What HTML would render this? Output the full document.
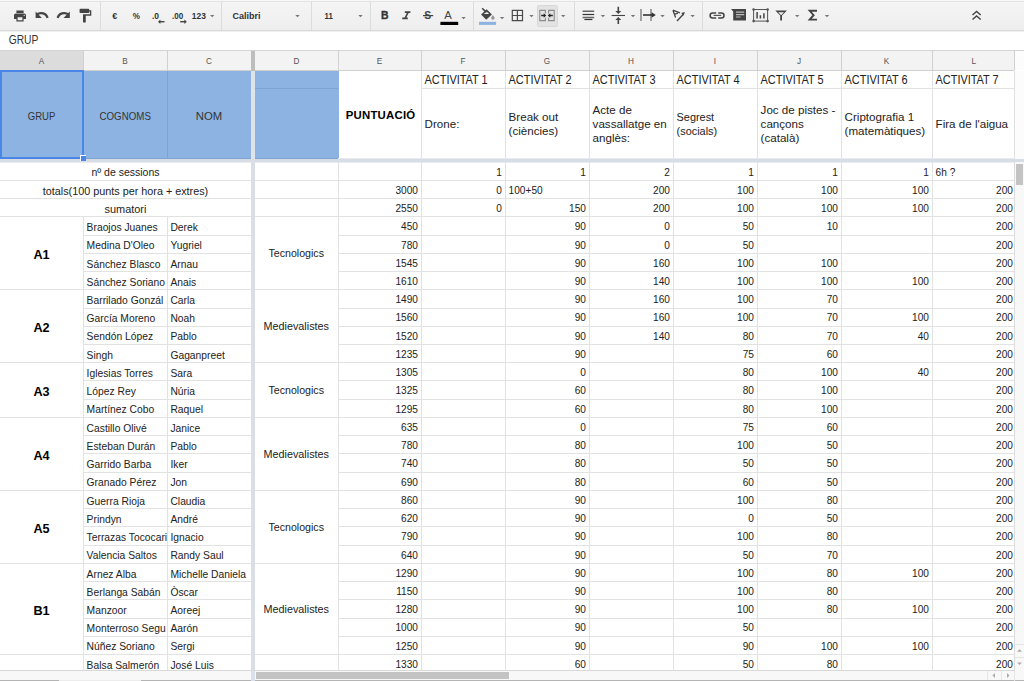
<!DOCTYPE html><html><head><meta charset="utf-8"><style>
*{margin:0;padding:0}
html,body{width:1024px;height:681px;overflow:hidden;background:#fff}
.a{position:absolute}
svg{display:block}
text{font-family:"Liberation Sans",sans-serif;white-space:pre}
</style></head><body>

<svg class="a" style="position:absolute;left:0;top:0" width="1024" height="681" viewBox="0 0 1024 681" shape-rendering="crispEdges">
<defs><linearGradient id="tg" x1="0" y1="0" x2="0" y2="1"><stop offset="0" stop-color="#f5f5f5"/><stop offset="1" stop-color="#eeeeee"/></linearGradient></defs>
<rect x="0" y="0" width="1024" height="31" fill="url(#tg)"/>
<rect x="0" y="0" width="1024" height="1" fill="#f7f7f7"/>
<rect x="0" y="1" width="1024" height="1" fill="#e3e3e3"/>
<rect x="0" y="30" width="1024" height="1" fill="#d9d9d9"/>
<rect x="0" y="31" width="1024" height="1" fill="#f0f0f0"/>
<rect x="100" y="2" width="1" height="28" fill="#dcdcdc"/>
<rect x="221" y="2" width="1" height="28" fill="#dcdcdc"/>
<rect x="311" y="2" width="1" height="28" fill="#dcdcdc"/>
<rect x="370" y="2" width="1" height="28" fill="#dcdcdc"/>
<rect x="473" y="2" width="1" height="28" fill="#dcdcdc"/>
<rect x="574" y="2" width="1" height="28" fill="#dcdcdc"/>
<rect x="702" y="2" width="1" height="28" fill="#dcdcdc"/>
</svg>
<svg class="a" style="left:0;top:0" width="1024" height="31" viewBox="0 0 1024 31">
<rect x="537.5" y="5.5" width="20" height="21" rx="1" fill="#e3e3e3" stroke="#d8d8d8" stroke-width="1"/>
<g transform="translate(12.8,8.8) scale(0.6)" fill="#444"><path d="M19 8H5c-1.66 0-3 1.34-3 3v6h4v4h12v-4h4v-6c0-1.66-1.34-3-3-3zm-3 11H8v-5h8v5zm3-7c-.55 0-1-.45-1-1s.45-1 1-1 1 .45 1 1-.45 1-1 1zm-1-9H6v4h12V3z"/></g>
<path d="M47.6 17.8c-1-2.9-3.6-4.7-6.6-4.7-1.8 0-3.3.6-4.5 1.6" stroke="#444" stroke-width="2.3" fill="none"/>
<path d="M35.6 11.6v6.3h6.3z" fill="#444"/>
<path d="M57.6 17.8c1-2.9 3.6-4.7 6.6-4.7 1.8 0 3.3.6 4.5 1.6" stroke="#444" stroke-width="2.3" fill="none"/>
<path d="M69.8 11.6v6.3h-6.3z" fill="#444"/>
<g transform="translate(76.8,7.4) scale(0.69)" fill="#444"><path d="M18 4V3c0-.55-.45-1-1-1H5c-.55 0-1 .45-1 1v4c0 .55.45 1 1 1h12c.55 0 1-.45 1-1V6h1v4H9v11c0 .55.45 1 1 1h2c.55 0 1-.45 1-1v-9h8V4h-3z"/></g>
<text transform="translate(112.2,18.9) scale(0.95,1)" font-family="Liberation Sans" font-size="9.4" font-weight="bold" fill="#333">€</text>
<text transform="translate(132.8,18.9) scale(0.86,1)" font-family="Liberation Sans" font-size="9.4" font-weight="bold" fill="#333">%</text>
<text transform="translate(152.0,18.9) scale(0.9,1)" font-family="Liberation Sans" font-size="9.4" font-weight="bold" fill="#333">.0</text>
<path d="M159.5 21.7h5" stroke="#444" stroke-width="1.4" fill="none"/><path d="M158 21.7l2.4-2.2v4.4z" fill="#444" fill="none"/>
<text transform="translate(172.0,18.9) scale(0.86,1)" font-family="Liberation Sans" font-size="9.4" font-weight="bold" fill="#333">.00</text>
<path d="M180.2 21.7h5" stroke="#444" stroke-width="1.4" fill="none"/><path d="M186.8 21.7l-2.4-2.2v4.4z" fill="#444" fill="none"/>
<text transform="translate(191.8,19.2) scale(0.86,1)" font-family="Liberation Sans" font-size="9.8" font-weight="bold" fill="#333">123</text>
<path d="M210 15h4.4l-2.2 2.2z" fill="#777"/>
<text transform="translate(232.4,19.3) scale(0.96,1)" font-family="Liberation Sans" font-size="9.4" font-weight="bold" fill="#333">Calibri</text>
<path d="M295.3 15h4.4l-2.2 2.2z" fill="#777"/>
<text transform="translate(324.6,19.3) scale(0.8,1)" font-family="Liberation Sans" font-size="9.8" font-weight="bold" fill="#333">11</text>
<path d="M358.3 15h4.4l-2.2 2.2z" fill="#777"/>
<text x="380.9" y="19.1" font-family="Liberation Sans" font-size="10.4" font-weight="bold" fill="#333" stroke="#333" stroke-width="0.35">B</text>
<path d="M404.8 12.1h5.6M402.2 18.4h5.6M408.2 12.1l-3.2 6.3" stroke="#444" stroke-width="1.6" fill="none"/>
<text x="424.2" y="19.2" font-family="Liberation Sans" font-size="10.4" font-weight="bold" fill="#444">S</text>
<path d="M423 15.6h10.2" stroke="#444" stroke-width="1.2"/>
<text x="444.3" y="19.1" font-family="Liberation Sans" font-size="11.3" fill="#444">A</text>
<rect x="440.4" y="21.8" width="17.8" height="3.2" fill="#000"/>
<path d="M461.4 17h4.4l-2.2 2.2z" fill="#777"/>
<g shape-rendering="geometricPrecision"><path d="M481.1 14.6L486.6 9.3 491.9 14.4 486.2 19.7z" fill="#444"/><path d="M483.9 13.9L486.5 11.5 489.1 13.9z" fill="#eee"/><path d="M482.2 8.2L486.4 12.4" stroke="#444" stroke-width="1.5"/><path d="M492.9 14.9c-.9 1.3-1.8 2.3-1.8 3.1a1.8 1.8 0 0 0 3.6 0c0-.8-.9-1.8-1.8-3.1z" fill="#999"/></g>
<rect x="479" y="21.8" width="17.1" height="3.1" fill="#8db3e2"/>
<path d="M499.9 17h4.4l-2.2 2.2z" fill="#777"/>
<path d="M512.3 10.4h10.2v10.2h-10.2zM517.4 10.4v10.2M512.3 15.5h10.2" stroke="#4a4a4a" stroke-width="1.2" fill="none"/>
<path d="M529.3 15h4.4l-2.2 2.2z" fill="#777"/>
<path d="M545.4 13.4v-3h-5.6v10.2h5.6v-2.8M548.6 13.4v-3h5.6v10.2h-5.6v-2.8" stroke="#8a8a8a" stroke-width="1.1" fill="none"/>
<path d="M541.2 15.5h3M552.8 15.5h-3" stroke="#222" stroke-width="1.3" fill="none"/><path d="M546.2 15.5l-2.5-2.2v4.4zM547.8 15.5l2.5-2.2v4.4z" fill="#222"/>
<path d="M561 15h4.4l-2.2 2.2z" fill="#777"/>
<path d="M582.6 11.3h11.6M582.6 17.5h11.6" stroke="#666" stroke-width="1.6" fill="none"/>
<path d="M582.6 14.5h11.6" stroke="#333" stroke-width="1.2" fill="none"/>
<path d="M584.4 19.5h8" stroke="#333" stroke-width="1.2" fill="none"/>
<path d="M600.7 15h4.4l-2.2 2.2z" fill="#777"/>
<path d="M618.3 6.8v5.5M618.3 18.5v5.5" stroke="#444" stroke-width="1.6" fill="none"/><path d="M611.6 15.5h13.4" stroke="#444" stroke-width="1.1" fill="none"/>
<path d="M615.3 11l3 3.1 3-3.1zM615.3 20l3-3.1 3 3.1z" fill="#444"/>
<path d="M630.8 15h4.4l-2.2 2.2z" fill="#777"/>
<path d="M641 9v12M651 9v12" stroke="#999" stroke-width="1.8"/>
<path d="M643 15h9.5" stroke="#333" stroke-width="1.6"/><path d="M651.6 12.2l4.2 2.8-4.2 2.8z" fill="#333"/>
<path d="M660.3 15h4.4l-2.2 2.2z" fill="#777"/>
<path d="M672.9 10.2l2.7 7.3M672.9 10.2l7 2.6M674.4 14.2l3.5-.9" stroke="#444" stroke-width="1.3" fill="none"/>
<path d="M677 21l6.6-6.9" stroke="#444" stroke-width="1.4" fill="none"/>
<path d="M681.2 13.1l3.6-1.2-1.1 3.6z" fill="#444"/>
<path d="M690.4 15h4.4l-2.2 2.2z" fill="#777"/>
<path d="M716.2 12.9h-3.6a2.5 2.5 0 0 0 0 5h3.6M718.2 12.9h3.3a2.5 2.5 0 0 1 0 5h-3.3" stroke="#444" stroke-width="1.5" fill="none"/>
<path d="M713.6 15.4h7.6" stroke="#555" stroke-width="1.2" fill="none"/>
<path d="M731 9h15v11.6h-12.8v-9.2z" fill="#444"/>
<path d="M736 12.2h8.2M736 14.6h8.2M736 17h4.6" stroke="#bbb" stroke-width="1.2"/>
<rect x="753.6" y="9.5" width="14" height="11.6" fill="none" stroke="#555" stroke-width="1"/>
<circle cx="753.6" cy="9.5" r="1.3" fill="#555"/>
<circle cx="767.6" cy="9.5" r="1.3" fill="#555"/>
<circle cx="753.6" cy="21.1" r="1.3" fill="#555"/>
<circle cx="767.6" cy="21.1" r="1.3" fill="#555"/>
<path d="M757.1 12v6.6M760.4 15.2v3.4M763.9 13.3v5.3" stroke="#444" stroke-width="1.5"/>
<path d="M775.3 10.5h11.6l-4.9 5v5.1h-1.8v-5.1z" fill="#444"/><path d="M778.2 12.3h5.8l-2.9 2.9z" fill="#efefef"/>
<path d="M795 15h4.4l-2.2 2.2z" fill="#777"/>
<path d="M817 10.8h-7.3l3.9 4.4-3.9 4.4h7.3" stroke="#444" stroke-width="1.9" fill="none"/>
<path d="M824.8 15h4.4l-2.2 2.2z" fill="#777"/>
<path d="M972.5 15l4.1-3.5 4.1 3.5M972.5 19.5l4.1-3.5 4.1 3.5" stroke="#444" stroke-width="1.4" fill="none"/>
</svg>
<svg class="a" style="position:absolute;left:0;top:0" width="1024" height="681" viewBox="0 0 1024 681" shape-rendering="crispEdges">
<rect x="0" y="32" width="1024" height="18" fill="#ffffff"/>
<rect x="0" y="50" width="1024" height="1" fill="#d4d4d4"/>
<text transform="translate(8.70,44.20) scale(0.84,1)" font-size="12.2" text-anchor="start" font-weight="normal" fill="#333">GRUP</text>
<rect x="0" y="51" width="1024" height="19" fill="#f3f3f3"/>
<rect x="0" y="51" width="83" height="19" fill="#dcdcdc"/>
<rect x="0" y="70" width="1014" height="1" fill="#d0d0d0"/>
<text x="41.50" y="63.50" font-size="8.2" text-anchor="middle" font-weight="normal" fill="#555">A</text>
<rect x="83" y="51" width="1" height="19" fill="#d0d0d0"/>
<text x="125.00" y="63.50" font-size="8.2" text-anchor="middle" font-weight="normal" fill="#555">B</text>
<rect x="167" y="51" width="1" height="19" fill="#d0d0d0"/>
<text x="209.00" y="63.50" font-size="8.2" text-anchor="middle" font-weight="normal" fill="#555">C</text>
<text x="296.50" y="63.50" font-size="8.2" text-anchor="middle" font-weight="normal" fill="#555">D</text>
<rect x="338" y="51" width="1" height="19" fill="#d0d0d0"/>
<text x="379.50" y="63.50" font-size="8.2" text-anchor="middle" font-weight="normal" fill="#555">E</text>
<rect x="421" y="51" width="1" height="19" fill="#d0d0d0"/>
<text x="463.00" y="63.50" font-size="8.2" text-anchor="middle" font-weight="normal" fill="#555">F</text>
<rect x="505" y="51" width="1" height="19" fill="#d0d0d0"/>
<text x="547.00" y="63.50" font-size="8.2" text-anchor="middle" font-weight="normal" fill="#555">G</text>
<rect x="589" y="51" width="1" height="19" fill="#d0d0d0"/>
<text x="631.00" y="63.50" font-size="8.2" text-anchor="middle" font-weight="normal" fill="#555">H</text>
<rect x="673" y="51" width="1" height="19" fill="#d0d0d0"/>
<text x="715.00" y="63.50" font-size="8.2" text-anchor="middle" font-weight="normal" fill="#555">I</text>
<rect x="757" y="51" width="1" height="19" fill="#d0d0d0"/>
<text x="799.00" y="63.50" font-size="8.2" text-anchor="middle" font-weight="normal" fill="#555">J</text>
<rect x="841" y="51" width="1" height="19" fill="#d0d0d0"/>
<text x="886.50" y="63.50" font-size="8.2" text-anchor="middle" font-weight="normal" fill="#555">K</text>
<rect x="932" y="51" width="1" height="19" fill="#d0d0d0"/>
<text x="973.75" y="63.50" font-size="8.2" text-anchor="middle" font-weight="normal" fill="#555">L</text>
<rect x="1014" y="51" width="1" height="19" fill="#d0d0d0"/>
<rect x="251" y="51" width="4" height="20" fill="#bdbdbd"/>
<rect x="1015" y="51" width="9" height="19" fill="#fcfcfc"/>
<rect x="0" y="71" width="251" height="88" fill="#8db3e2"/>
<rect x="255" y="71" width="84" height="88" fill="#8db3e2"/>
<rect x="0" y="158" width="251" height="1" fill="#7fa3d2"/>
<rect x="255" y="158" width="84" height="1" fill="#7fa3d2"/>
<rect x="83" y="71" width="1" height="87" fill="#7fa3d2"/>
<rect x="167" y="71" width="1" height="87" fill="#7fa3d2"/>
<rect x="255" y="88" width="84" height="1" fill="#7fa3d2"/>
<rect x="421" y="71" width="1" height="87" fill="#e2e2e2"/>
<rect x="505" y="71" width="1" height="87" fill="#e2e2e2"/>
<rect x="589" y="71" width="1" height="87" fill="#e2e2e2"/>
<rect x="673" y="71" width="1" height="87" fill="#e2e2e2"/>
<rect x="757" y="71" width="1" height="87" fill="#e2e2e2"/>
<rect x="841" y="71" width="1" height="87" fill="#e2e2e2"/>
<rect x="932" y="71" width="1" height="87" fill="#e2e2e2"/>
<rect x="421" y="88" width="593" height="1" fill="#e2e2e2"/>
<rect x="0" y="70" width="84" height="2" fill="#4a86e8"/>
<rect x="0" y="70" width="2" height="89" fill="#4a86e8"/>
<rect x="82" y="70" width="2" height="89" fill="#4a86e8"/>
<rect x="0" y="157" width="84" height="2" fill="#4a86e8"/>
<text transform="translate(41.50,119.60) scale(0.9,1)" font-size="10.6" text-anchor="middle" font-weight="normal" fill="#333">GRUP</text>
<text transform="translate(125.20,119.60) scale(0.92,1)" font-size="10.6" text-anchor="middle" font-weight="normal" fill="#333">COGNOMS</text>
<text transform="translate(209.00,119.60) scale(1.07,1)" font-size="10.6" text-anchor="middle" font-weight="normal" fill="#333">NOM</text>
<text x="345.80" y="119.40" font-size="11.4" text-anchor="start" font-weight="bold" fill="#000" letter-spacing="0.2">PUNTUACIÓ</text>
<text transform="translate(424.60,83.90) scale(0.895,1)" font-size="12.2" text-anchor="start" font-weight="normal" fill="#222">ACTIVITAT 1</text>
<text x="424.60" y="127.90" font-size="11.6" text-anchor="start" font-weight="normal" fill="#222">Drone:</text>
<text transform="translate(508.60,83.90) scale(0.895,1)" font-size="12.2" text-anchor="start" font-weight="normal" fill="#222">ACTIVITAT 2</text>
<text x="508.60" y="121.03" font-size="11.6" text-anchor="start" font-weight="normal" fill="#222">Break out</text>
<text x="508.60" y="134.78" font-size="11.6" text-anchor="start" font-weight="normal" fill="#222">(ciències)</text>
<text transform="translate(592.60,83.90) scale(0.895,1)" font-size="12.2" text-anchor="start" font-weight="normal" fill="#222">ACTIVITAT 3</text>
<text x="592.60" y="114.15" font-size="11.6" text-anchor="start" font-weight="normal" fill="#222">Acte de</text>
<text x="592.60" y="127.90" font-size="11.6" text-anchor="start" font-weight="normal" fill="#222">vassallatge en</text>
<text x="592.60" y="141.65" font-size="11.6" text-anchor="start" font-weight="normal" fill="#222">anglès:</text>
<text transform="translate(676.60,83.90) scale(0.895,1)" font-size="12.2" text-anchor="start" font-weight="normal" fill="#222">ACTIVITAT 4</text>
<text x="676.60" y="121.03" font-size="10.9" text-anchor="start" font-weight="normal" fill="#222">Segrest</text>
<text x="676.60" y="134.78" font-size="10.9" text-anchor="start" font-weight="normal" fill="#222">(socials)</text>
<text transform="translate(760.60,83.90) scale(0.895,1)" font-size="12.2" text-anchor="start" font-weight="normal" fill="#222">ACTIVITAT 5</text>
<text x="760.60" y="114.15" font-size="11.6" text-anchor="start" font-weight="normal" fill="#222">Joc de pistes -</text>
<text x="760.60" y="127.90" font-size="11.6" text-anchor="start" font-weight="normal" fill="#222">cançons</text>
<text x="760.60" y="141.65" font-size="11.6" text-anchor="start" font-weight="normal" fill="#222">(català)</text>
<text transform="translate(844.60,83.90) scale(0.895,1)" font-size="12.2" text-anchor="start" font-weight="normal" fill="#222">ACTIVITAT 6</text>
<text x="844.60" y="121.03" font-size="11.6" text-anchor="start" font-weight="normal" fill="#222">Criptografia 1</text>
<text x="844.60" y="134.78" font-size="11.6" text-anchor="start" font-weight="normal" fill="#222">(matemàtiques)</text>
<text transform="translate(935.60,83.90) scale(0.895,1)" font-size="12.2" text-anchor="start" font-weight="normal" fill="#222">ACTIVITAT 7</text>
<text x="935.60" y="127.90" font-size="11.6" text-anchor="start" font-weight="normal" fill="#222">Fira de l&#39;aigua</text>
<rect x="338" y="158" width="686" height="1" fill="#e6e9ef"/>
<rect x="0" y="159" width="1024" height="3" fill="#d7dce5"/>
<rect x="0" y="162" width="1014" height="1" fill="#e9ecf1"/>
<rect x="251" y="71" width="4" height="88" fill="#dfe3ea"/>
<rect x="251" y="159" width="4" height="522" fill="#d9dee7"/>
<rect x="0" y="157" width="84" height="2" fill="#4a86e8"/>
<rect x="80" y="155" width="6" height="6" fill="#4a86e8"/>
<rect x="80" y="155" width="6" height="1" fill="#ffffff"/>
<rect x="80" y="155" width="1" height="6" fill="#ffffff"/>
<rect x="0" y="180" width="251" height="1" fill="#e2e2e2"/>
<rect x="255" y="180" width="759" height="1" fill="#e2e2e2"/>
<rect x="0" y="198" width="251" height="1" fill="#e2e2e2"/>
<rect x="255" y="198" width="759" height="1" fill="#e2e2e2"/>
<rect x="0" y="216" width="251" height="1" fill="#e2e2e2"/>
<rect x="255" y="216" width="759" height="1" fill="#e2e2e2"/>
<rect x="83" y="235" width="168" height="1" fill="#e2e2e2"/>
<rect x="338" y="235" width="676" height="1" fill="#e2e2e2"/>
<rect x="83" y="253" width="168" height="1" fill="#e2e2e2"/>
<rect x="338" y="253" width="676" height="1" fill="#e2e2e2"/>
<rect x="83" y="271" width="168" height="1" fill="#e2e2e2"/>
<rect x="338" y="271" width="676" height="1" fill="#e2e2e2"/>
<rect x="0" y="289" width="251" height="1" fill="#e2e2e2"/>
<rect x="255" y="289" width="759" height="1" fill="#e2e2e2"/>
<rect x="83" y="308" width="168" height="1" fill="#e2e2e2"/>
<rect x="338" y="308" width="676" height="1" fill="#e2e2e2"/>
<rect x="83" y="326" width="168" height="1" fill="#e2e2e2"/>
<rect x="338" y="326" width="676" height="1" fill="#e2e2e2"/>
<rect x="83" y="344" width="168" height="1" fill="#e2e2e2"/>
<rect x="338" y="344" width="676" height="1" fill="#e2e2e2"/>
<rect x="0" y="362" width="251" height="1" fill="#e2e2e2"/>
<rect x="255" y="362" width="759" height="1" fill="#e2e2e2"/>
<rect x="83" y="380" width="168" height="1" fill="#e2e2e2"/>
<rect x="338" y="380" width="676" height="1" fill="#e2e2e2"/>
<rect x="83" y="399" width="168" height="1" fill="#e2e2e2"/>
<rect x="338" y="399" width="676" height="1" fill="#e2e2e2"/>
<rect x="0" y="417" width="251" height="1" fill="#e2e2e2"/>
<rect x="255" y="417" width="759" height="1" fill="#e2e2e2"/>
<rect x="83" y="435" width="168" height="1" fill="#e2e2e2"/>
<rect x="338" y="435" width="676" height="1" fill="#e2e2e2"/>
<rect x="83" y="453" width="168" height="1" fill="#e2e2e2"/>
<rect x="338" y="453" width="676" height="1" fill="#e2e2e2"/>
<rect x="83" y="472" width="168" height="1" fill="#e2e2e2"/>
<rect x="338" y="472" width="676" height="1" fill="#e2e2e2"/>
<rect x="0" y="490" width="251" height="1" fill="#e2e2e2"/>
<rect x="255" y="490" width="759" height="1" fill="#e2e2e2"/>
<rect x="83" y="508" width="168" height="1" fill="#e2e2e2"/>
<rect x="338" y="508" width="676" height="1" fill="#e2e2e2"/>
<rect x="83" y="526" width="168" height="1" fill="#e2e2e2"/>
<rect x="338" y="526" width="676" height="1" fill="#e2e2e2"/>
<rect x="83" y="545" width="168" height="1" fill="#e2e2e2"/>
<rect x="338" y="545" width="676" height="1" fill="#e2e2e2"/>
<rect x="0" y="563" width="251" height="1" fill="#e2e2e2"/>
<rect x="255" y="563" width="759" height="1" fill="#e2e2e2"/>
<rect x="83" y="581" width="168" height="1" fill="#e2e2e2"/>
<rect x="338" y="581" width="676" height="1" fill="#e2e2e2"/>
<rect x="83" y="599" width="168" height="1" fill="#e2e2e2"/>
<rect x="338" y="599" width="676" height="1" fill="#e2e2e2"/>
<rect x="83" y="618" width="168" height="1" fill="#e2e2e2"/>
<rect x="338" y="618" width="676" height="1" fill="#e2e2e2"/>
<rect x="83" y="636" width="168" height="1" fill="#e2e2e2"/>
<rect x="338" y="636" width="676" height="1" fill="#e2e2e2"/>
<rect x="0" y="654" width="251" height="1" fill="#e2e2e2"/>
<rect x="255" y="654" width="759" height="1" fill="#e2e2e2"/>
<rect x="83" y="216" width="1" height="454" fill="#e2e2e2"/>
<rect x="167" y="216" width="1" height="454" fill="#e2e2e2"/>
<rect x="338" y="162" width="1" height="508" fill="#e2e2e2"/>
<rect x="421" y="162" width="1" height="508" fill="#e2e2e2"/>
<rect x="505" y="162" width="1" height="508" fill="#e2e2e2"/>
<rect x="589" y="162" width="1" height="508" fill="#e2e2e2"/>
<rect x="673" y="162" width="1" height="508" fill="#e2e2e2"/>
<rect x="757" y="162" width="1" height="508" fill="#e2e2e2"/>
<rect x="841" y="162" width="1" height="508" fill="#e2e2e2"/>
<rect x="932" y="162" width="1" height="508" fill="#e2e2e2"/>
<defs><clipPath id="cb"><rect x="84" y="162" width="83" height="510"/></clipPath><clipPath id="cc"><rect x="168" y="162" width="83" height="510"/></clipPath><clipPath id="body"><rect x="0" y="162" width="1014" height="508"/></clipPath></defs>
<g clip-path="url(#body)">
<text transform="translate(125.50,176.37) scale(1.02,1)" font-size="10.3" text-anchor="middle" font-weight="normal" fill="#222">nº de sessions</text>
<text transform="translate(502.00,175.57) scale(0.88,1)" font-size="11.5" text-anchor="end" font-weight="normal" fill="#222">1</text>
<text transform="translate(586.00,175.57) scale(0.88,1)" font-size="11.5" text-anchor="end" font-weight="normal" fill="#222">1</text>
<text transform="translate(670.00,175.57) scale(0.88,1)" font-size="11.5" text-anchor="end" font-weight="normal" fill="#222">2</text>
<text transform="translate(754.00,175.57) scale(0.88,1)" font-size="11.5" text-anchor="end" font-weight="normal" fill="#222">1</text>
<text transform="translate(838.00,175.57) scale(0.88,1)" font-size="11.5" text-anchor="end" font-weight="normal" fill="#222">1</text>
<text transform="translate(929.00,175.57) scale(0.88,1)" font-size="11.5" text-anchor="end" font-weight="normal" fill="#222">1</text>
<text transform="translate(935.60,175.57) scale(0.88,1)" font-size="11.5" text-anchor="start" font-weight="normal" fill="#222">6h ?</text>
<text transform="translate(125.50,194.60) scale(1.05,1)" font-size="10.3" text-anchor="middle" font-weight="normal" fill="#222">totals(100 punts per hora + extres)</text>
<text transform="translate(418.00,193.80) scale(0.88,1)" font-size="11.5" text-anchor="end" font-weight="normal" fill="#222">3000</text>
<text transform="translate(502.00,193.80) scale(0.88,1)" font-size="11.5" text-anchor="end" font-weight="normal" fill="#222">0</text>
<text transform="translate(508.60,193.80) scale(0.88,1)" font-size="11.5" text-anchor="start" font-weight="normal" fill="#222">100+50</text>
<text transform="translate(670.00,193.80) scale(0.88,1)" font-size="11.5" text-anchor="end" font-weight="normal" fill="#222">200</text>
<text transform="translate(754.00,193.80) scale(0.88,1)" font-size="11.5" text-anchor="end" font-weight="normal" fill="#222">100</text>
<text transform="translate(838.00,193.80) scale(0.88,1)" font-size="11.5" text-anchor="end" font-weight="normal" fill="#222">100</text>
<text transform="translate(929.00,193.80) scale(0.88,1)" font-size="11.5" text-anchor="end" font-weight="normal" fill="#222">100</text>
<text transform="translate(1012.90,193.80) scale(0.88,1)" font-size="11.5" text-anchor="end" font-weight="normal" fill="#222">200</text>
<text transform="translate(125.50,212.83) scale(1.06,1)" font-size="10.3" text-anchor="middle" font-weight="normal" fill="#222">sumatori</text>
<text transform="translate(418.00,212.03) scale(0.88,1)" font-size="11.5" text-anchor="end" font-weight="normal" fill="#222">2550</text>
<text transform="translate(502.00,212.03) scale(0.88,1)" font-size="11.5" text-anchor="end" font-weight="normal" fill="#222">0</text>
<text transform="translate(586.00,212.03) scale(0.88,1)" font-size="11.5" text-anchor="end" font-weight="normal" fill="#222">150</text>
<text transform="translate(670.00,212.03) scale(0.88,1)" font-size="11.5" text-anchor="end" font-weight="normal" fill="#222">200</text>
<text transform="translate(754.00,212.03) scale(0.88,1)" font-size="11.5" text-anchor="end" font-weight="normal" fill="#222">100</text>
<text transform="translate(838.00,212.03) scale(0.88,1)" font-size="11.5" text-anchor="end" font-weight="normal" fill="#222">100</text>
<text transform="translate(929.00,212.03) scale(0.88,1)" font-size="11.5" text-anchor="end" font-weight="normal" fill="#222">100</text>
<text transform="translate(1012.90,212.03) scale(0.88,1)" font-size="11.5" text-anchor="end" font-weight="normal" fill="#222">200</text>
<g clip-path="url(#cb)"><text transform="translate(86.60,231.07) scale(1.01,1)" font-size="10.2" text-anchor="start" font-weight="normal" fill="#222">Braojos Juanes</text></g>
<g clip-path="url(#cc)"><text transform="translate(170.40,231.07) scale(1.01,1)" font-size="10.2" text-anchor="start" font-weight="normal" fill="#222">Derek</text></g>
<text transform="translate(418.00,230.27) scale(0.88,1)" font-size="11.5" text-anchor="end" font-weight="normal" fill="#222">450</text>
<text transform="translate(586.00,230.27) scale(0.88,1)" font-size="11.5" text-anchor="end" font-weight="normal" fill="#222">90</text>
<text transform="translate(670.00,230.27) scale(0.88,1)" font-size="11.5" text-anchor="end" font-weight="normal" fill="#222">0</text>
<text transform="translate(754.00,230.27) scale(0.88,1)" font-size="11.5" text-anchor="end" font-weight="normal" fill="#222">50</text>
<text transform="translate(838.00,230.27) scale(0.88,1)" font-size="11.5" text-anchor="end" font-weight="normal" fill="#222">10</text>
<text transform="translate(1012.90,230.27) scale(0.88,1)" font-size="11.5" text-anchor="end" font-weight="normal" fill="#222">200</text>
<g clip-path="url(#cb)"><text transform="translate(86.60,249.31) scale(1.01,1)" font-size="10.2" text-anchor="start" font-weight="normal" fill="#222">Medina D&#39;Oleo</text></g>
<g clip-path="url(#cc)"><text transform="translate(170.40,249.31) scale(1.01,1)" font-size="10.2" text-anchor="start" font-weight="normal" fill="#222">Yugriel</text></g>
<text transform="translate(418.00,248.51) scale(0.88,1)" font-size="11.5" text-anchor="end" font-weight="normal" fill="#222">780</text>
<text transform="translate(586.00,248.51) scale(0.88,1)" font-size="11.5" text-anchor="end" font-weight="normal" fill="#222">90</text>
<text transform="translate(670.00,248.51) scale(0.88,1)" font-size="11.5" text-anchor="end" font-weight="normal" fill="#222">0</text>
<text transform="translate(754.00,248.51) scale(0.88,1)" font-size="11.5" text-anchor="end" font-weight="normal" fill="#222">50</text>
<text transform="translate(1012.90,248.51) scale(0.88,1)" font-size="11.5" text-anchor="end" font-weight="normal" fill="#222">200</text>
<g clip-path="url(#cb)"><text transform="translate(86.60,267.54) scale(1.01,1)" font-size="10.2" text-anchor="start" font-weight="normal" fill="#222">Sánchez Blasco</text></g>
<g clip-path="url(#cc)"><text transform="translate(170.40,267.54) scale(1.01,1)" font-size="10.2" text-anchor="start" font-weight="normal" fill="#222">Arnau</text></g>
<text transform="translate(418.00,266.74) scale(0.88,1)" font-size="11.5" text-anchor="end" font-weight="normal" fill="#222">1545</text>
<text transform="translate(586.00,266.74) scale(0.88,1)" font-size="11.5" text-anchor="end" font-weight="normal" fill="#222">90</text>
<text transform="translate(670.00,266.74) scale(0.88,1)" font-size="11.5" text-anchor="end" font-weight="normal" fill="#222">160</text>
<text transform="translate(754.00,266.74) scale(0.88,1)" font-size="11.5" text-anchor="end" font-weight="normal" fill="#222">100</text>
<text transform="translate(838.00,266.74) scale(0.88,1)" font-size="11.5" text-anchor="end" font-weight="normal" fill="#222">100</text>
<text transform="translate(1012.90,266.74) scale(0.88,1)" font-size="11.5" text-anchor="end" font-weight="normal" fill="#222">200</text>
<g clip-path="url(#cb)"><text transform="translate(86.60,285.77) scale(1.01,1)" font-size="10.2" text-anchor="start" font-weight="normal" fill="#222">Sánchez Soriano</text></g>
<g clip-path="url(#cc)"><text transform="translate(170.40,285.77) scale(1.01,1)" font-size="10.2" text-anchor="start" font-weight="normal" fill="#222">Anais</text></g>
<text transform="translate(418.00,284.97) scale(0.88,1)" font-size="11.5" text-anchor="end" font-weight="normal" fill="#222">1610</text>
<text transform="translate(586.00,284.97) scale(0.88,1)" font-size="11.5" text-anchor="end" font-weight="normal" fill="#222">90</text>
<text transform="translate(670.00,284.97) scale(0.88,1)" font-size="11.5" text-anchor="end" font-weight="normal" fill="#222">140</text>
<text transform="translate(754.00,284.97) scale(0.88,1)" font-size="11.5" text-anchor="end" font-weight="normal" fill="#222">100</text>
<text transform="translate(838.00,284.97) scale(0.88,1)" font-size="11.5" text-anchor="end" font-weight="normal" fill="#222">100</text>
<text transform="translate(929.00,284.97) scale(0.88,1)" font-size="11.5" text-anchor="end" font-weight="normal" fill="#222">100</text>
<text transform="translate(1012.90,284.97) scale(0.88,1)" font-size="11.5" text-anchor="end" font-weight="normal" fill="#222">200</text>
<g clip-path="url(#cb)"><text transform="translate(86.60,304.01) scale(1.01,1)" font-size="10.2" text-anchor="start" font-weight="normal" fill="#222">Barrilado Gonzál</text></g>
<g clip-path="url(#cc)"><text transform="translate(170.40,304.01) scale(1.01,1)" font-size="10.2" text-anchor="start" font-weight="normal" fill="#222">Carla</text></g>
<text transform="translate(418.00,303.21) scale(0.88,1)" font-size="11.5" text-anchor="end" font-weight="normal" fill="#222">1490</text>
<text transform="translate(586.00,303.21) scale(0.88,1)" font-size="11.5" text-anchor="end" font-weight="normal" fill="#222">90</text>
<text transform="translate(670.00,303.21) scale(0.88,1)" font-size="11.5" text-anchor="end" font-weight="normal" fill="#222">160</text>
<text transform="translate(754.00,303.21) scale(0.88,1)" font-size="11.5" text-anchor="end" font-weight="normal" fill="#222">100</text>
<text transform="translate(838.00,303.21) scale(0.88,1)" font-size="11.5" text-anchor="end" font-weight="normal" fill="#222">70</text>
<text transform="translate(1012.90,303.21) scale(0.88,1)" font-size="11.5" text-anchor="end" font-weight="normal" fill="#222">200</text>
<g clip-path="url(#cb)"><text transform="translate(86.60,322.25) scale(1.01,1)" font-size="10.2" text-anchor="start" font-weight="normal" fill="#222">García Moreno</text></g>
<g clip-path="url(#cc)"><text transform="translate(170.40,322.25) scale(1.01,1)" font-size="10.2" text-anchor="start" font-weight="normal" fill="#222">Noah</text></g>
<text transform="translate(418.00,321.44) scale(0.88,1)" font-size="11.5" text-anchor="end" font-weight="normal" fill="#222">1560</text>
<text transform="translate(586.00,321.44) scale(0.88,1)" font-size="11.5" text-anchor="end" font-weight="normal" fill="#222">90</text>
<text transform="translate(670.00,321.44) scale(0.88,1)" font-size="11.5" text-anchor="end" font-weight="normal" fill="#222">160</text>
<text transform="translate(754.00,321.44) scale(0.88,1)" font-size="11.5" text-anchor="end" font-weight="normal" fill="#222">100</text>
<text transform="translate(838.00,321.44) scale(0.88,1)" font-size="11.5" text-anchor="end" font-weight="normal" fill="#222">70</text>
<text transform="translate(929.00,321.44) scale(0.88,1)" font-size="11.5" text-anchor="end" font-weight="normal" fill="#222">100</text>
<text transform="translate(1012.90,321.44) scale(0.88,1)" font-size="11.5" text-anchor="end" font-weight="normal" fill="#222">200</text>
<g clip-path="url(#cb)"><text transform="translate(86.60,340.48) scale(1.01,1)" font-size="10.2" text-anchor="start" font-weight="normal" fill="#222">Sendón López</text></g>
<g clip-path="url(#cc)"><text transform="translate(170.40,340.48) scale(1.01,1)" font-size="10.2" text-anchor="start" font-weight="normal" fill="#222">Pablo</text></g>
<text transform="translate(418.00,339.68) scale(0.88,1)" font-size="11.5" text-anchor="end" font-weight="normal" fill="#222">1520</text>
<text transform="translate(586.00,339.68) scale(0.88,1)" font-size="11.5" text-anchor="end" font-weight="normal" fill="#222">90</text>
<text transform="translate(670.00,339.68) scale(0.88,1)" font-size="11.5" text-anchor="end" font-weight="normal" fill="#222">140</text>
<text transform="translate(754.00,339.68) scale(0.88,1)" font-size="11.5" text-anchor="end" font-weight="normal" fill="#222">80</text>
<text transform="translate(838.00,339.68) scale(0.88,1)" font-size="11.5" text-anchor="end" font-weight="normal" fill="#222">70</text>
<text transform="translate(929.00,339.68) scale(0.88,1)" font-size="11.5" text-anchor="end" font-weight="normal" fill="#222">40</text>
<text transform="translate(1012.90,339.68) scale(0.88,1)" font-size="11.5" text-anchor="end" font-weight="normal" fill="#222">200</text>
<g clip-path="url(#cb)"><text transform="translate(86.60,358.71) scale(1.01,1)" font-size="10.2" text-anchor="start" font-weight="normal" fill="#222">Singh</text></g>
<g clip-path="url(#cc)"><text transform="translate(170.40,358.71) scale(1.01,1)" font-size="10.2" text-anchor="start" font-weight="normal" fill="#222">Gaganpreet</text></g>
<text transform="translate(418.00,357.91) scale(0.88,1)" font-size="11.5" text-anchor="end" font-weight="normal" fill="#222">1235</text>
<text transform="translate(586.00,357.91) scale(0.88,1)" font-size="11.5" text-anchor="end" font-weight="normal" fill="#222">90</text>
<text transform="translate(754.00,357.91) scale(0.88,1)" font-size="11.5" text-anchor="end" font-weight="normal" fill="#222">75</text>
<text transform="translate(838.00,357.91) scale(0.88,1)" font-size="11.5" text-anchor="end" font-weight="normal" fill="#222">60</text>
<text transform="translate(1012.90,357.91) scale(0.88,1)" font-size="11.5" text-anchor="end" font-weight="normal" fill="#222">200</text>
<g clip-path="url(#cb)"><text transform="translate(86.60,376.95) scale(1.01,1)" font-size="10.2" text-anchor="start" font-weight="normal" fill="#222">Iglesias Torres</text></g>
<g clip-path="url(#cc)"><text transform="translate(170.40,376.95) scale(1.01,1)" font-size="10.2" text-anchor="start" font-weight="normal" fill="#222">Sara</text></g>
<text transform="translate(418.00,376.15) scale(0.88,1)" font-size="11.5" text-anchor="end" font-weight="normal" fill="#222">1305</text>
<text transform="translate(586.00,376.15) scale(0.88,1)" font-size="11.5" text-anchor="end" font-weight="normal" fill="#222">0</text>
<text transform="translate(754.00,376.15) scale(0.88,1)" font-size="11.5" text-anchor="end" font-weight="normal" fill="#222">80</text>
<text transform="translate(838.00,376.15) scale(0.88,1)" font-size="11.5" text-anchor="end" font-weight="normal" fill="#222">100</text>
<text transform="translate(929.00,376.15) scale(0.88,1)" font-size="11.5" text-anchor="end" font-weight="normal" fill="#222">40</text>
<text transform="translate(1012.90,376.15) scale(0.88,1)" font-size="11.5" text-anchor="end" font-weight="normal" fill="#222">200</text>
<g clip-path="url(#cb)"><text transform="translate(86.60,395.19) scale(1.01,1)" font-size="10.2" text-anchor="start" font-weight="normal" fill="#222">López Rey</text></g>
<g clip-path="url(#cc)"><text transform="translate(170.40,395.19) scale(1.01,1)" font-size="10.2" text-anchor="start" font-weight="normal" fill="#222">Núria</text></g>
<text transform="translate(418.00,394.38) scale(0.88,1)" font-size="11.5" text-anchor="end" font-weight="normal" fill="#222">1325</text>
<text transform="translate(586.00,394.38) scale(0.88,1)" font-size="11.5" text-anchor="end" font-weight="normal" fill="#222">60</text>
<text transform="translate(754.00,394.38) scale(0.88,1)" font-size="11.5" text-anchor="end" font-weight="normal" fill="#222">80</text>
<text transform="translate(838.00,394.38) scale(0.88,1)" font-size="11.5" text-anchor="end" font-weight="normal" fill="#222">100</text>
<text transform="translate(1012.90,394.38) scale(0.88,1)" font-size="11.5" text-anchor="end" font-weight="normal" fill="#222">200</text>
<g clip-path="url(#cb)"><text transform="translate(86.60,413.42) scale(1.01,1)" font-size="10.2" text-anchor="start" font-weight="normal" fill="#222">Martínez Cobo</text></g>
<g clip-path="url(#cc)"><text transform="translate(170.40,413.42) scale(1.01,1)" font-size="10.2" text-anchor="start" font-weight="normal" fill="#222">Raquel</text></g>
<text transform="translate(418.00,412.62) scale(0.88,1)" font-size="11.5" text-anchor="end" font-weight="normal" fill="#222">1295</text>
<text transform="translate(586.00,412.62) scale(0.88,1)" font-size="11.5" text-anchor="end" font-weight="normal" fill="#222">60</text>
<text transform="translate(754.00,412.62) scale(0.88,1)" font-size="11.5" text-anchor="end" font-weight="normal" fill="#222">80</text>
<text transform="translate(838.00,412.62) scale(0.88,1)" font-size="11.5" text-anchor="end" font-weight="normal" fill="#222">100</text>
<text transform="translate(1012.90,412.62) scale(0.88,1)" font-size="11.5" text-anchor="end" font-weight="normal" fill="#222">200</text>
<g clip-path="url(#cb)"><text transform="translate(86.60,431.66) scale(1.01,1)" font-size="10.2" text-anchor="start" font-weight="normal" fill="#222">Castillo Olivé</text></g>
<g clip-path="url(#cc)"><text transform="translate(170.40,431.66) scale(1.01,1)" font-size="10.2" text-anchor="start" font-weight="normal" fill="#222">Janice</text></g>
<text transform="translate(418.00,430.86) scale(0.88,1)" font-size="11.5" text-anchor="end" font-weight="normal" fill="#222">635</text>
<text transform="translate(586.00,430.86) scale(0.88,1)" font-size="11.5" text-anchor="end" font-weight="normal" fill="#222">0</text>
<text transform="translate(754.00,430.86) scale(0.88,1)" font-size="11.5" text-anchor="end" font-weight="normal" fill="#222">75</text>
<text transform="translate(838.00,430.86) scale(0.88,1)" font-size="11.5" text-anchor="end" font-weight="normal" fill="#222">60</text>
<text transform="translate(1012.90,430.86) scale(0.88,1)" font-size="11.5" text-anchor="end" font-weight="normal" fill="#222">200</text>
<g clip-path="url(#cb)"><text transform="translate(86.60,449.89) scale(1.01,1)" font-size="10.2" text-anchor="start" font-weight="normal" fill="#222">Esteban Durán</text></g>
<g clip-path="url(#cc)"><text transform="translate(170.40,449.89) scale(1.01,1)" font-size="10.2" text-anchor="start" font-weight="normal" fill="#222">Pablo</text></g>
<text transform="translate(418.00,449.09) scale(0.88,1)" font-size="11.5" text-anchor="end" font-weight="normal" fill="#222">780</text>
<text transform="translate(586.00,449.09) scale(0.88,1)" font-size="11.5" text-anchor="end" font-weight="normal" fill="#222">80</text>
<text transform="translate(754.00,449.09) scale(0.88,1)" font-size="11.5" text-anchor="end" font-weight="normal" fill="#222">100</text>
<text transform="translate(838.00,449.09) scale(0.88,1)" font-size="11.5" text-anchor="end" font-weight="normal" fill="#222">50</text>
<text transform="translate(1012.90,449.09) scale(0.88,1)" font-size="11.5" text-anchor="end" font-weight="normal" fill="#222">200</text>
<g clip-path="url(#cb)"><text transform="translate(86.60,468.12) scale(1.01,1)" font-size="10.2" text-anchor="start" font-weight="normal" fill="#222">Garrido Barba</text></g>
<g clip-path="url(#cc)"><text transform="translate(170.40,468.12) scale(1.01,1)" font-size="10.2" text-anchor="start" font-weight="normal" fill="#222">Iker</text></g>
<text transform="translate(418.00,467.32) scale(0.88,1)" font-size="11.5" text-anchor="end" font-weight="normal" fill="#222">740</text>
<text transform="translate(586.00,467.32) scale(0.88,1)" font-size="11.5" text-anchor="end" font-weight="normal" fill="#222">80</text>
<text transform="translate(754.00,467.32) scale(0.88,1)" font-size="11.5" text-anchor="end" font-weight="normal" fill="#222">50</text>
<text transform="translate(838.00,467.32) scale(0.88,1)" font-size="11.5" text-anchor="end" font-weight="normal" fill="#222">50</text>
<text transform="translate(1012.90,467.32) scale(0.88,1)" font-size="11.5" text-anchor="end" font-weight="normal" fill="#222">200</text>
<g clip-path="url(#cb)"><text transform="translate(86.60,486.36) scale(1.01,1)" font-size="10.2" text-anchor="start" font-weight="normal" fill="#222">Granado Pérez</text></g>
<g clip-path="url(#cc)"><text transform="translate(170.40,486.36) scale(1.01,1)" font-size="10.2" text-anchor="start" font-weight="normal" fill="#222">Jon</text></g>
<text transform="translate(418.00,485.56) scale(0.88,1)" font-size="11.5" text-anchor="end" font-weight="normal" fill="#222">690</text>
<text transform="translate(586.00,485.56) scale(0.88,1)" font-size="11.5" text-anchor="end" font-weight="normal" fill="#222">80</text>
<text transform="translate(754.00,485.56) scale(0.88,1)" font-size="11.5" text-anchor="end" font-weight="normal" fill="#222">60</text>
<text transform="translate(838.00,485.56) scale(0.88,1)" font-size="11.5" text-anchor="end" font-weight="normal" fill="#222">50</text>
<text transform="translate(1012.90,485.56) scale(0.88,1)" font-size="11.5" text-anchor="end" font-weight="normal" fill="#222">200</text>
<g clip-path="url(#cb)"><text transform="translate(86.60,504.59) scale(1.01,1)" font-size="10.2" text-anchor="start" font-weight="normal" fill="#222">Guerra Rioja</text></g>
<g clip-path="url(#cc)"><text transform="translate(170.40,504.59) scale(1.01,1)" font-size="10.2" text-anchor="start" font-weight="normal" fill="#222">Claudia</text></g>
<text transform="translate(418.00,503.79) scale(0.88,1)" font-size="11.5" text-anchor="end" font-weight="normal" fill="#222">860</text>
<text transform="translate(586.00,503.79) scale(0.88,1)" font-size="11.5" text-anchor="end" font-weight="normal" fill="#222">90</text>
<text transform="translate(754.00,503.79) scale(0.88,1)" font-size="11.5" text-anchor="end" font-weight="normal" fill="#222">100</text>
<text transform="translate(838.00,503.79) scale(0.88,1)" font-size="11.5" text-anchor="end" font-weight="normal" fill="#222">80</text>
<text transform="translate(1012.90,503.79) scale(0.88,1)" font-size="11.5" text-anchor="end" font-weight="normal" fill="#222">200</text>
<g clip-path="url(#cb)"><text transform="translate(86.60,522.83) scale(1.01,1)" font-size="10.2" text-anchor="start" font-weight="normal" fill="#222">Prindyn</text></g>
<g clip-path="url(#cc)"><text transform="translate(170.40,522.83) scale(1.01,1)" font-size="10.2" text-anchor="start" font-weight="normal" fill="#222">André</text></g>
<text transform="translate(418.00,522.03) scale(0.88,1)" font-size="11.5" text-anchor="end" font-weight="normal" fill="#222">620</text>
<text transform="translate(586.00,522.03) scale(0.88,1)" font-size="11.5" text-anchor="end" font-weight="normal" fill="#222">90</text>
<text transform="translate(754.00,522.03) scale(0.88,1)" font-size="11.5" text-anchor="end" font-weight="normal" fill="#222">0</text>
<text transform="translate(838.00,522.03) scale(0.88,1)" font-size="11.5" text-anchor="end" font-weight="normal" fill="#222">50</text>
<text transform="translate(1012.90,522.03) scale(0.88,1)" font-size="11.5" text-anchor="end" font-weight="normal" fill="#222">200</text>
<g clip-path="url(#cb)"><text transform="translate(86.60,541.07) scale(1.01,1)" font-size="10.2" text-anchor="start" font-weight="normal" fill="#222">Terrazas Tococari</text></g>
<g clip-path="url(#cc)"><text transform="translate(170.40,541.07) scale(1.01,1)" font-size="10.2" text-anchor="start" font-weight="normal" fill="#222">Ignacio</text></g>
<text transform="translate(418.00,540.26) scale(0.88,1)" font-size="11.5" text-anchor="end" font-weight="normal" fill="#222">790</text>
<text transform="translate(586.00,540.26) scale(0.88,1)" font-size="11.5" text-anchor="end" font-weight="normal" fill="#222">90</text>
<text transform="translate(754.00,540.26) scale(0.88,1)" font-size="11.5" text-anchor="end" font-weight="normal" fill="#222">100</text>
<text transform="translate(838.00,540.26) scale(0.88,1)" font-size="11.5" text-anchor="end" font-weight="normal" fill="#222">80</text>
<text transform="translate(1012.90,540.26) scale(0.88,1)" font-size="11.5" text-anchor="end" font-weight="normal" fill="#222">200</text>
<g clip-path="url(#cb)"><text transform="translate(86.60,559.30) scale(1.01,1)" font-size="10.2" text-anchor="start" font-weight="normal" fill="#222">Valencia Saltos</text></g>
<g clip-path="url(#cc)"><text transform="translate(170.40,559.30) scale(1.01,1)" font-size="10.2" text-anchor="start" font-weight="normal" fill="#222">Randy Saul</text></g>
<text transform="translate(418.00,558.50) scale(0.88,1)" font-size="11.5" text-anchor="end" font-weight="normal" fill="#222">640</text>
<text transform="translate(586.00,558.50) scale(0.88,1)" font-size="11.5" text-anchor="end" font-weight="normal" fill="#222">90</text>
<text transform="translate(754.00,558.50) scale(0.88,1)" font-size="11.5" text-anchor="end" font-weight="normal" fill="#222">50</text>
<text transform="translate(838.00,558.50) scale(0.88,1)" font-size="11.5" text-anchor="end" font-weight="normal" fill="#222">70</text>
<text transform="translate(1012.90,558.50) scale(0.88,1)" font-size="11.5" text-anchor="end" font-weight="normal" fill="#222">200</text>
<g clip-path="url(#cb)"><text transform="translate(86.60,577.54) scale(1.01,1)" font-size="10.2" text-anchor="start" font-weight="normal" fill="#222">Arnez Alba</text></g>
<g clip-path="url(#cc)"><text transform="translate(170.40,577.54) scale(1.01,1)" font-size="10.2" text-anchor="start" font-weight="normal" fill="#222">Michelle Daniela</text></g>
<text transform="translate(418.00,576.74) scale(0.88,1)" font-size="11.5" text-anchor="end" font-weight="normal" fill="#222">1290</text>
<text transform="translate(586.00,576.74) scale(0.88,1)" font-size="11.5" text-anchor="end" font-weight="normal" fill="#222">90</text>
<text transform="translate(754.00,576.74) scale(0.88,1)" font-size="11.5" text-anchor="end" font-weight="normal" fill="#222">100</text>
<text transform="translate(838.00,576.74) scale(0.88,1)" font-size="11.5" text-anchor="end" font-weight="normal" fill="#222">80</text>
<text transform="translate(929.00,576.74) scale(0.88,1)" font-size="11.5" text-anchor="end" font-weight="normal" fill="#222">100</text>
<text transform="translate(1012.90,576.74) scale(0.88,1)" font-size="11.5" text-anchor="end" font-weight="normal" fill="#222">200</text>
<g clip-path="url(#cb)"><text transform="translate(86.60,595.77) scale(1.01,1)" font-size="10.2" text-anchor="start" font-weight="normal" fill="#222">Berlanga Sabán</text></g>
<g clip-path="url(#cc)"><text transform="translate(170.40,595.77) scale(1.01,1)" font-size="10.2" text-anchor="start" font-weight="normal" fill="#222">Òscar</text></g>
<text transform="translate(418.00,594.97) scale(0.88,1)" font-size="11.5" text-anchor="end" font-weight="normal" fill="#222">1150</text>
<text transform="translate(586.00,594.97) scale(0.88,1)" font-size="11.5" text-anchor="end" font-weight="normal" fill="#222">90</text>
<text transform="translate(754.00,594.97) scale(0.88,1)" font-size="11.5" text-anchor="end" font-weight="normal" fill="#222">100</text>
<text transform="translate(838.00,594.97) scale(0.88,1)" font-size="11.5" text-anchor="end" font-weight="normal" fill="#222">80</text>
<text transform="translate(1012.90,594.97) scale(0.88,1)" font-size="11.5" text-anchor="end" font-weight="normal" fill="#222">200</text>
<g clip-path="url(#cb)"><text transform="translate(86.60,614.00) scale(1.01,1)" font-size="10.2" text-anchor="start" font-weight="normal" fill="#222">Manzoor</text></g>
<g clip-path="url(#cc)"><text transform="translate(170.40,614.00) scale(1.01,1)" font-size="10.2" text-anchor="start" font-weight="normal" fill="#222">Aoreej</text></g>
<text transform="translate(418.00,613.20) scale(0.88,1)" font-size="11.5" text-anchor="end" font-weight="normal" fill="#222">1280</text>
<text transform="translate(586.00,613.20) scale(0.88,1)" font-size="11.5" text-anchor="end" font-weight="normal" fill="#222">90</text>
<text transform="translate(754.00,613.20) scale(0.88,1)" font-size="11.5" text-anchor="end" font-weight="normal" fill="#222">100</text>
<text transform="translate(838.00,613.20) scale(0.88,1)" font-size="11.5" text-anchor="end" font-weight="normal" fill="#222">80</text>
<text transform="translate(929.00,613.20) scale(0.88,1)" font-size="11.5" text-anchor="end" font-weight="normal" fill="#222">100</text>
<text transform="translate(1012.90,613.20) scale(0.88,1)" font-size="11.5" text-anchor="end" font-weight="normal" fill="#222">200</text>
<g clip-path="url(#cb)"><text transform="translate(86.60,632.24) scale(1.01,1)" font-size="10.2" text-anchor="start" font-weight="normal" fill="#222">Monterroso Segu</text></g>
<g clip-path="url(#cc)"><text transform="translate(170.40,632.24) scale(1.01,1)" font-size="10.2" text-anchor="start" font-weight="normal" fill="#222">Aarón</text></g>
<text transform="translate(418.00,631.44) scale(0.88,1)" font-size="11.5" text-anchor="end" font-weight="normal" fill="#222">1000</text>
<text transform="translate(586.00,631.44) scale(0.88,1)" font-size="11.5" text-anchor="end" font-weight="normal" fill="#222">90</text>
<text transform="translate(754.00,631.44) scale(0.88,1)" font-size="11.5" text-anchor="end" font-weight="normal" fill="#222">50</text>
<text transform="translate(1012.90,631.44) scale(0.88,1)" font-size="11.5" text-anchor="end" font-weight="normal" fill="#222">200</text>
<g clip-path="url(#cb)"><text transform="translate(86.60,650.48) scale(1.01,1)" font-size="10.2" text-anchor="start" font-weight="normal" fill="#222">Núñez Soriano</text></g>
<g clip-path="url(#cc)"><text transform="translate(170.40,650.48) scale(1.01,1)" font-size="10.2" text-anchor="start" font-weight="normal" fill="#222">Sergi</text></g>
<text transform="translate(418.00,649.67) scale(0.88,1)" font-size="11.5" text-anchor="end" font-weight="normal" fill="#222">1250</text>
<text transform="translate(586.00,649.67) scale(0.88,1)" font-size="11.5" text-anchor="end" font-weight="normal" fill="#222">90</text>
<text transform="translate(754.00,649.67) scale(0.88,1)" font-size="11.5" text-anchor="end" font-weight="normal" fill="#222">90</text>
<text transform="translate(838.00,649.67) scale(0.88,1)" font-size="11.5" text-anchor="end" font-weight="normal" fill="#222">100</text>
<text transform="translate(929.00,649.67) scale(0.88,1)" font-size="11.5" text-anchor="end" font-weight="normal" fill="#222">100</text>
<text transform="translate(1012.90,649.67) scale(0.88,1)" font-size="11.5" text-anchor="end" font-weight="normal" fill="#222">200</text>
<g clip-path="url(#cb)"><text transform="translate(86.60,668.71) scale(1.01,1)" font-size="10.2" text-anchor="start" font-weight="normal" fill="#222">Balsa Salmerón</text></g>
<g clip-path="url(#cc)"><text transform="translate(170.40,668.71) scale(1.01,1)" font-size="10.2" text-anchor="start" font-weight="normal" fill="#222">José Luis</text></g>
<text transform="translate(418.00,667.91) scale(0.88,1)" font-size="11.5" text-anchor="end" font-weight="normal" fill="#222">1330</text>
<text transform="translate(586.00,667.91) scale(0.88,1)" font-size="11.5" text-anchor="end" font-weight="normal" fill="#222">60</text>
<text transform="translate(754.00,667.91) scale(0.88,1)" font-size="11.5" text-anchor="end" font-weight="normal" fill="#222">50</text>
<text transform="translate(838.00,667.91) scale(0.88,1)" font-size="11.5" text-anchor="end" font-weight="normal" fill="#222">80</text>
<text transform="translate(1012.90,667.91) scale(0.88,1)" font-size="11.5" text-anchor="end" font-weight="normal" fill="#222">200</text>
<text transform="translate(41.50,259.14) scale(0.96,1)" font-size="13.2" text-anchor="middle" font-weight="bold" fill="#000">A1</text>
<text transform="translate(296.20,257.34) scale(0.967,1)" font-size="11.0" text-anchor="middle" font-weight="normal" fill="#222">Tecnologics</text>
<text transform="translate(41.50,332.08) scale(0.96,1)" font-size="13.2" text-anchor="middle" font-weight="bold" fill="#000">A2</text>
<text transform="translate(296.20,330.28) scale(0.985,1)" font-size="11.0" text-anchor="middle" font-weight="normal" fill="#222">Medievalistes</text>
<text transform="translate(41.50,395.90) scale(0.96,1)" font-size="13.2" text-anchor="middle" font-weight="bold" fill="#000">A3</text>
<text transform="translate(296.20,394.10) scale(0.967,1)" font-size="11.0" text-anchor="middle" font-weight="normal" fill="#222">Tecnologics</text>
<text transform="translate(41.50,459.73) scale(0.96,1)" font-size="13.2" text-anchor="middle" font-weight="bold" fill="#000">A4</text>
<text transform="translate(296.20,457.93) scale(0.985,1)" font-size="11.0" text-anchor="middle" font-weight="normal" fill="#222">Medievalistes</text>
<text transform="translate(41.50,532.66) scale(0.96,1)" font-size="13.2" text-anchor="middle" font-weight="bold" fill="#000">A5</text>
<text transform="translate(296.20,530.87) scale(0.967,1)" font-size="11.0" text-anchor="middle" font-weight="normal" fill="#222">Tecnologics</text>
<text transform="translate(41.50,614.72) scale(0.96,1)" font-size="13.2" text-anchor="middle" font-weight="bold" fill="#000">B1</text>
<text transform="translate(296.20,612.92) scale(0.985,1)" font-size="11.0" text-anchor="middle" font-weight="normal" fill="#222">Medievalistes</text>
</g>
<rect x="0" y="670" width="1014" height="1" fill="#d8d8d8"/>
<rect x="1014" y="71" width="1" height="87" fill="#e0e0e0"/>
<rect x="1015" y="71" width="9" height="88" fill="#fcfcfc"/>
<rect x="1014" y="162" width="1" height="509" fill="#dcdcdc"/>
<rect x="1015" y="162" width="9" height="509" fill="#f8f8f8"/>
<rect x="1016" y="164" width="7" height="21" fill="#c3c3c3"/>
<rect x="1015" y="657" width="9" height="1" fill="#e6e6e6"/>
<rect x="1015" y="644" width="9" height="1" fill="#e6e6e6"/>
<rect x="0" y="671" width="1024" height="9" fill="#f8f8f8"/>
<rect x="256" y="672" width="253" height="7" fill="#c3c3c3"/>
<rect x="0" y="680" width="1024" height="1" fill="#b4b4b4"/>
<rect x="59" y="680" width="82" height="1" fill="#ececec"/>
<rect x="251" y="671" width="4" height="10" fill="#dbe1ec"/>
<rect x="987" y="671" width="1" height="9" fill="#e6e6e6"/>
<rect x="1001" y="671" width="1" height="9" fill="#e6e6e6"/>
<rect x="1014" y="671" width="1" height="10" fill="#e6e6e6"/>
</svg>
<svg class="a" style="position:absolute;left:0;top:0" width="1024" height="681" viewBox="0 0 1024 681">
<path d="M1017 651.8h5l-2.5-2.5z" fill="#aaa"/><path d="M1017 662.5h5l-2.5 2.5z" fill="#aaa"/>
<path d="M995 673l-2.5 2.5 2.5 2.5z" fill="#aaa"/><path d="M1007 673l2.5 2.5-2.5 2.5z" fill="#aaa"/>
</svg>
</body></html>
